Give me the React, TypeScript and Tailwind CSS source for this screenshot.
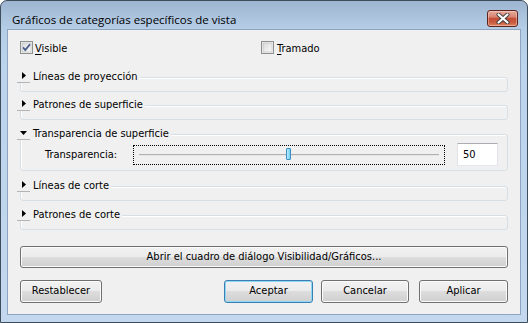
const body = "font-['DejaVu_Sans_Condensed','Liberation_Sans',sans-serif] text-[11px] text-black";

function CheckBox({ checked }: { checked: boolean }) {
  return (
    <svg width="13" height="13" viewBox="0 0 13 13" className="shrink-0">
      <defs>
        <linearGradient id={checked ? 'cbg1' : 'cbg0'} x1="0" y1="0" x2="1" y2="1">
          <stop offset="0" stopColor="#dadada" />
          <stop offset="1" stopColor="#fbfbfb" />
        </linearGradient>
      </defs>
      <rect x="0.5" y="0.5" width="12" height="12" fill="#f4f4f4" stroke="#8e8f8f" />
      <rect x="2" y="2" width="9" height="9" fill={`url(#${checked ? 'cbg1' : 'cbg0'})`} stroke="#b9b9b9" strokeWidth="0.6" />
      {checked && (
        <path d="M3 6.4 L5.3 9 L10 3.2" fill="none" stroke="#4a5e8c" strokeWidth="1.8" />
      )}
    </svg>
  );
}

function Arrow({ open }: { open: boolean }) {
  return open ? (
    <svg width="8" height="5" viewBox="0 0 8 5">
      <path d="M0 0 H7 L3.5 4 Z" fill="#000" />
    </svg>
  ) : (
    <svg width="5" height="8" viewBox="0 0 5 8">
      <path d="M0 0 V7 L4 3.5 Z" fill="#000" />
    </svg>
  );
}

function Group({
  title,
  open = false,
  className = '',
  children,
}: {
  title: string;
  open?: boolean;
  className?: string;
  children?: React.ReactNode;
}) {
  return (
    <div
      className={`relative rounded-[3px] border border-[#d5dfe5] shadow-[inset_1px_1px_0_#fff] ${className}`}
    >
      <div className="absolute left-[-4px] top-[-8px] flex h-[13px] items-stretch bg-[#f0f0f0]">
        <div className="flex w-[13px] items-center justify-center border-b border-[#b4b4b4] pl-[1px]">
          <Arrow open={open} />
        </div>
        <span className="flex items-center pl-[3px] pr-[2px] leading-none">{title}</span>
      </div>
      {children}
    </div>
  );
}

function Button({
  label,
  className = '',
  primary = false,
}: {
  label: string;
  className?: string;
  primary?: boolean;
}) {
  return (
    <div
      className={`flex items-center justify-center rounded-[3px] border bg-[linear-gradient(to_bottom,#f2f2f2_0%,#ebebeb_50%,#dddddd_50%,#cfcfcf_100%)] ${
        primary
          ? 'border-[#3c7fb1] shadow-[inset_0_0_0_1px_#8ed8f6]'
          : 'border-[#707070] shadow-[inset_0_0_0_1px_#fbfbfb]'
      } ${className}`}
    >
      {label}
    </div>
  );
}

function CloseButton() {
  return (
    <div className="mr-[3px] mt-[9px] flex h-[17px] w-[31px] items-center justify-center rounded-[3px] border border-[#5c2620] bg-[linear-gradient(to_bottom,#e7ab9e_0%,#d98471_40%,#c44f36_50%,#c95a3f_75%,#dc8463_100%)] shadow-[inset_0_0_0_1px_rgba(255,220,210,0.45)]">
      <svg width="14" height="11" viewBox="0 0 14 11">
        <path d="M2.5 1.5 L11.5 9.5 M11.5 1.5 L2.5 9.5" stroke="#3d3d3d" strokeWidth="4" strokeLinecap="round" />
        <path d="M2.5 1.5 L11.5 9.5 M11.5 1.5 L2.5 9.5" stroke="#ffffff" strokeWidth="2.2" strokeLinecap="round" />
      </svg>
    </div>
  );
}

export default function App() {
  return (
    <div className="h-[323px] w-[528px] bg-white">
      <div className="flex h-[323px] w-[528px] flex-col rounded-t-[7px] border border-[#3f4c5b] bg-[linear-gradient(to_bottom,#9db6d1_0px,#b6cde6_28px,#bcd3ec_60px,#c3d8ee_100%)] px-[6px] pb-[7px]">
        <div className="flex h-[28px] items-start justify-between">
          <span className="mt-[13px] pl-[5px] font-['Open_Sans','Noto_Sans',sans-serif] text-[11.5px] leading-none text-black">
            Gráficos de categorías específicos de vista
          </span>
          <CloseButton />
        </div>

        <div className={`flex flex-1 flex-col border border-[#8da5c0] bg-[#f0f0f0] px-[12px] ${body}`}>
          <div className="mt-[11px] flex h-[13px] items-center">
            <div className="flex w-[241px] items-center gap-[1px]">
              <CheckBox checked />
              <span className="pl-[1px] pt-[1px] leading-none">
                <span className="underline underline-offset-2">V</span>isible
              </span>
            </div>
            <div className="flex items-center gap-[2px]">
              <CheckBox checked={false} />
              <span className="pl-[1px] pt-[1px] leading-none">
                <span className="underline underline-offset-2">T</span>ramado
              </span>
            </div>
          </div>

          <Group title="Líneas de proyección" className="mt-[23px] h-[15px]" />
          <Group title="Patrones de superficie" className="mt-[13px] h-[15px]" />
          <Group title="Transparencia de superficie" open className="mt-[14px] h-[37px] pt-[8px]">
            <div className="flex h-[23px] items-center">
              <span className="w-[112px] pl-[24px] leading-none">Transparencia:</span>
              <div className="relative flex h-[20px] w-[312px] items-center border border-dotted border-black px-[5px]">
                <div className="h-[2px] w-full border-t border-[#b0b0b0] bg-[#e6e6e6]" />
                <div className="absolute left-[152px] top-[2px] h-[12px] w-[5px] rounded-[1px] border border-[#3a8fc4] bg-[linear-gradient(to_right,#bfeafb,#6fd0f3)]" />
              </div>
              <div className="ml-[12px] flex h-[23px] w-[41px] items-center border border-[#e2e3ea] border-t-[#abadb3] border-b-[#e3e9ef] bg-white pl-[5px] leading-none">
                50
              </div>
            </div>
          </Group>
          <Group title="Líneas de corte" className="mt-[15px] h-[15px]" />
          <Group title="Patrones de corte" className="mt-[14px] h-[15px]" />

          <Button label="Abrir el cuadro de diálogo Visibilidad/Gráficos..." className="mt-[16px] h-[22px] w-full" />

          <div className="mt-[12px] flex h-[23px]">
            <Button label="Restablecer" className="w-[82px]" />
            <Button label="Aceptar" primary className="ml-auto w-[89px]" />
            <Button label="Cancelar" className="ml-[8px] w-[88px]" />
            <Button label="Aplicar" className="ml-[10px] w-[89px]" />
          </div>
        </div>
      </div>
    </div>
  );
}
